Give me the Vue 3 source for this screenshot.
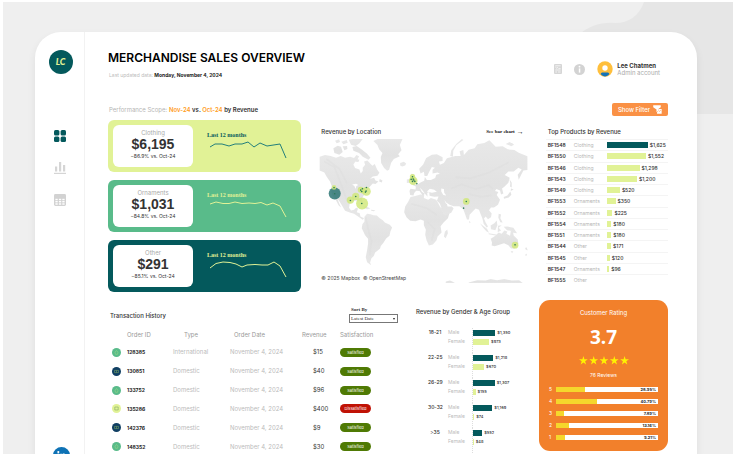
<script setup>
const cards = [
  { name: 'Clothing', value: '$6,195', change: '−86.9% vs. Oct-24', tone: 'lime', line: '3,16 8,13 15,13 22,15 28,13 35,13 41,11 47,16 53,12 60,15 73,13 79,27' },
  { name: 'Ornaments', value: '$1,031', change: '−84.8% vs. Oct-24', tone: 'green', line: '3,13 9,11 16,12.5 22,12.5 28,11 35,12.5 42,12 48,12.5 54,11.5 60,14 66,12 73,15 79,26' },
  { name: 'Other', value: '$291', change: '−85.1% vs. Oct-24', tone: 'teal', line: '3,17 9,12.5 16,11 23,11.5 29,13 35,16 40,14 48,13.5 55,14 61,14 67,11 73,15 79,26' }
]

const products = [
  ['BF1548', 'Clothing', 1625], ['BF1550', 'Clothing', 1552], ['BF1546', 'Clothing', 1298],
  ['BF1543', 'Clothing', 1200], ['BF1549', 'Clothing', 520], ['BF1553', 'Ornaments', 350],
  ['BF1552', 'Ornaments', 225], ['BF1554', 'Ornaments', 180], ['BF1551', 'Ornaments', 180],
  ['BF1544', 'Other', 171], ['BF1545', 'Other', 120], ['BF1547', 'Ornaments', 96],
  ['BF1555', 'Other', 0]
]

const orders = [
  { id: '128385', kind: 'green', type: 'International', amount: '$15', ok: true },
  { id: '130851', kind: 'navy', type: 'Domestic', amount: '$40', ok: true },
  { id: '133752', kind: 'green', type: 'Domestic', amount: '$96', ok: true },
  { id: '135286', kind: 'lime', type: 'Domestic', amount: '$400', ok: false },
  { id: '142376', kind: 'navy', type: 'Domestic', amount: '$9', ok: true },
  { id: '148352', kind: 'green', type: 'Domestic', amount: '$30', ok: true }
]

const ages = [
  { range: '18-21', male: 1350, female: 973 },
  { range: '22-25', male: 1218, female: 670 },
  { range: '26-29', male: 1307, female: 155 },
  { range: '30-32', male: 1169, female: 74 },
  { range: '>35', male: 552, female: 48 }
]

const ratings = [[5, '28.95'], [4, '40.79'], [3, '7.89'], [2, '13.16'], [1, '9.21']]

const spots = [
  [74, 220, 18, 'big'], [72, 202, 7], [121, 240, 11], [137, 229, 11], [156, 250, 18],
  [152, 209, 9], [158, 212, 8], [169, 214, 13], [307, 170, 8], [309, 182, 13],
  [468, 244, 10], [614, 375, 10]
]
const dots = [
  [74, 221], [72, 202], [121, 241], [137, 229], [155, 250], [152, 210], [157, 206], [155, 214],
  [166, 216], [168, 213], [169, 202], [307, 170], [303, 178], [309, 177], [307, 184], [314, 184],
  [311, 180], [320, 191], [468, 244], [460, 264], [614, 374]
]

const money = (n) => '$' + n.toLocaleString('en-US')
</script>

<template>
  <div class="frame">
    <svg class="wave" viewBox="0 0 152 112" aria-hidden="true">
      <path d="M63 0C58 14 48 21 34 21C18 20 8 25 0 31L40 60L100 112H152V0Z" fill="#e6e6e6" />
    </svg>
    <div class="panel">
      <nav class="side" aria-label="Main">
        <a class="logo" href="#">LC</a>
        <a href="#" aria-label="Overview" class="item">
          <svg viewBox="0 0 12 12" fill="#04595c"><rect width="5.4" height="5.6" rx="1.5" /><rect x="6.6" width="5.4" height="5.6" rx="1.5" /><rect y="6.5" width="5.4" height="5.5" rx="1.5" /><rect x="6.6" y="6.5" width="5.4" height="5.5" rx="1.5" /></svg>
        </a>
        <a href="#" aria-label="Charts" class="item">
          <svg viewBox="0 0 12 12" fill="#d5d5d5"><rect x="1" y="4.5" width="2.2" height="5" /><rect x="5" width="2.2" height="9.5" /><rect x="9" y="3" width="2.2" height="6.5" /><rect y="10.8" width="12" height="1.2" /></svg>
        </a>
        <a href="#" aria-label="Calendar" class="item">
          <svg viewBox="0 0 12 12"><rect width="12" height="12" rx="1.4" fill="#d2d2d2" /><g fill="#fff"><rect x="1.4" y="4.8" width="2.3" height="1.4" /><rect x="4.9" y="4.8" width="2.3" height="1.4" /><rect x="8.3" y="4.8" width="2.3" height="1.4" /><rect x="1.4" y="7" width="2.3" height="1.4" /><rect x="4.9" y="7" width="2.3" height="1.4" /><rect x="8.3" y="7" width="2.3" height="1.4" /><rect x="1.4" y="9.3" width="2.3" height="1.4" /><rect x="4.9" y="9.3" width="2.3" height="1.4" /><rect x="8.3" y="9.3" width="2.3" height="1.4" /></g></svg>
        </a>
        <a href="#" class="linkedin" aria-label="LinkedIn">
          <svg viewBox="0 0 16 16"><circle cx="8" cy="8" r="8" fill="#0e72b5" /><g fill="#fff"><circle cx="5" cy="4.8" r="1" /><rect x="4.1" y="6.3" width="1.7" height="5.2" /><path d="M6.8 6.3H8.4V7C9.6 5.6 12 6 12 8.5V11.5H10.3V8.8C10.3 7.2 8.5 7.2 8.5 8.8V11.5H6.8Z" /></g></svg>
        </a>
      </nav>

      <main class="main">
        <header class="head">
          <div>
            <h1>MERCHANDISE SALES OVERVIEW</h1>
            <p class="updated">Last updated data: <b>Monday, November 4, 2024</b></p>
          </div>
          <div class="user">
            <svg class="doc" viewBox="0 0 8 10"><rect width="8" height="10" rx="1" fill="#d6d6d6" /><path d="M1.3 1.8H6.6M1.3 3L2.8 4.3L4 3.2M4.4 4.4H6.6M1.3 6H6.6M1.3 8H3M4 8H6.6" stroke="#fff" stroke-width=".7" fill="none" /></svg>
            <svg class="info" viewBox="0 0 11 11"><circle cx="5.5" cy="5.5" r="5.5" fill="#d3d3d3" /><circle cx="5.5" cy="2.7" r=".9" fill="#fff" /><rect x="4.8" y="4.4" width="1.5" height="4.2" fill="#fff" /></svg>
            <svg class="avatar" viewBox="0 0 16 16"><circle cx="8" cy="8" r="7.7" fill="#ffbf3c" /><circle cx="8" cy="7" r="2.7" fill="#fff" /><path d="M3.6 13C4 11.8 5 11.4 6 11.4H10C11 11.4 12 11.8 12.4 13C10 16.2 6 16.2 3.6 13Z" fill="#1473b8" /></svg>
            <p><b>Lee Chatmen</b><br />Admin account</p>
          </div>
        </header>

        <div class="scope">
          <p>Performance Scope: <b><em>Nov-24</em> vs. <em>Oct-24</em> by Revenue</b></p>
          <button type="button">Show Filter
            <svg viewBox="0 0 8 8" fill="#fff"><path d="M.2 .2H6.9V2L5 3.4V4.8L3.1 6.5V4L.2 2Z" /><path d="M5 3.6H7.7V7.8H3.6V6.5L5 5.2Z" /><path d="M5.3 6L7 4.6" stroke="#fa9145" stroke-width=".5" /></svg>
          </button>
        </div>

        <div class="row top">
          <section class="cards">
            <article v-for="c in cards" :key="c.name" class="card" :class="c.tone">
              <div class="stat"><span>{{ c.name }}</span><strong>{{ c.value }}</strong><small>{{ c.change }}</small></div>
              <div class="trend">
                <p>Last 12 months</p>
                <svg viewBox="0 8 82 22" aria-hidden="true"><polyline :points="c.line" fill="none" stroke-width="1" stroke-linejoin="round" /></svg>
              </div>
            </article>
          </section>

          <section>
            <div class="title"><h2>Revenue by Location</h2><a href="#">See bar chart <span>→</span></a></div>
            <div class="map">
              <svg viewBox="27 57 624 432" role="img" aria-label="World map of revenue">
                <defs>
                  <linearGradient id="land" x1="0" y1="0" x2="0" y2="1"><stop offset="0" stop-color="#e8e8e8" /><stop offset=".5" stop-color="#e2e2e2" /><stop offset="1" stop-color="#e7e7e7" /></linearGradient>
                </defs>
                <g fill="url(#land)">
                  <path d="M29 110L45 105L62 108L78 113L92 108L105 113L120 110L132 114L139 105L147 109L143 117L136 124L130 133L135 144L148 148L152 160L158 153L158 143L165 134L162 124L172 121L181 131L187 137L194 132L201 148L208 158L202 167L188 169L180 176L192 173L196 181L205 184L196 192L188 190L181 198L175 206L170 216L162 225L155 235L159 248L157 254L150 243L139 241L128 244L119 251L117 263L123 271L132 269L138 263L144 265L140 276L149 279L151 289L162 294L158 299L145 290L132 281L119 277L105 272L98 260L89 245L81 234L88 251L93 262L86 256L77 239L68 228L64 216L65 198L60 184L50 170L43 157L29 151Z" />
                  <path d="M75 62L87 58L90 66L80 70ZM70 85L83 77L93 80L98 96L88 104L73 99ZM94 65L110 60L113 68L100 73ZM98 79L111 78L112 87L103 91ZM116 59L128 57H158L148 70L137 78L123 74ZM127 81L140 78L156 89L171 101L181 113L175 119L158 110L147 99L130 92ZM137 116L148 119L145 126L136 125Z" />
                  <path d="M190 63L202 57H277L269 75L274 91L264 103L269 109L251 117L243 128L237 149L231 152L222 144L213 129L212 111L217 99L207 88L202 75Z" />
                  <path d="M270 129L281 125L288 130L285 136L276 139L270 136ZM209 177L217 181L215 187L207 184ZM157 260L168 258L181 265L171 267ZM183 269L196 270L191 273L183 272Z" />
                  <path d="M163 290L171 281L181 282L190 285L200 286L209 294L218 300L224 307L239 314L246 322L241 333L238 347L228 355L220 368L212 377L210 385L201 392L195 397L191 407L184 414L180 427L183 435L171 426L167 411L171 390L174 370L174 356L165 345L155 324L157 312L163 304Z" />
                  <path d="M301 231L315 228L331 223L342 225L341 234L354 239L362 234L378 239L384 249L391 263L401 280L418 278L413 294L400 307L391 318L394 337L382 349L379 360L368 373L356 376L349 360L345 344L347 329L341 315L341 302L331 298L316 303L300 302L289 291L282 276L285 259L294 245Z" />
                  <path d="M411 328L413 339L406 354L401 349L404 335ZM303 161L312 162L312 170L319 181L322 191L309 195L302 188L307 178L301 172ZM290 178L299 176L300 188L290 189Z" />
                  <path d="M300 225L298 213L301 206L316 208L317 199L307 195L321 194L331 187L342 182L344 171L350 180L362 180L375 174L378 164L389 161L382 157L367 160L367 149L374 143L365 141L357 155L351 168L343 168L341 155L331 160L327 146L339 133L348 114L365 104L380 103L397 112L397 123L386 124L389 134L401 129L410 115L435 108L451 108L448 94L459 90L461 105L475 89L493 85L501 73L522 69L537 61L556 80L577 79L592 88L612 90L625 98L651 109V150L639 151L632 165L625 179L622 164L634 148L624 143L610 154L594 154L583 165L598 173L594 188L582 200L575 205L579 220L572 223L569 211L558 207L554 213L564 216L559 225L569 239L563 254L551 262L542 262L536 270L544 280L542 291L533 297L526 289L521 295L526 307L533 319L529 322L520 311L516 294L511 282L506 269L496 265L488 273L478 284L476 298L470 298L464 281L459 267L447 258L430 258L418 254L409 248L412 259L425 259L430 265L423 278L404 286L395 273L386 253L380 242L385 229L372 230L358 227L357 216L351 218L352 230L345 222L336 210L329 203L335 215L344 221L338 227L328 213L318 212L312 219L310 226Z" />
                  <path d="M420 108L423 91L438 72L455 57L459 60L438 76L429 92L428 110ZM586 72L598 66L607 72L600 77ZM590 71L605 69L611 74L602 79ZM597 177L604 188L604 202L599 199L600 190ZM602 205L610 208L601 213ZM600 214L603 224L595 232L581 236L580 231L591 226ZM476 302L481 306L478 309ZM509 309L517 316L530 326L536 338L528 333L518 322ZM535 339L558 343L555 346L535 342ZM541 316L552 309L559 301L561 315L555 330L542 327ZM563 317L574 315L565 323L572 331L562 336ZM565 281L572 283L570 294L577 307L570 306L564 293ZM580 320L591 319L609 323L620 339L608 338L601 332L590 330Z" />
                  <path d="M541 356L552 349L565 337L574 341L582 331L591 334L588 341L599 347L602 328L608 336L610 346L622 358L624 371L614 385L602 385L594 375L581 369L567 374L553 378L544 376L545 367ZM601 393L609 393L605 399ZM647 380L651 387V391L644 386ZM643 404L650 400L648 407Z" />
                  <path d="M407 484L419 481L429 485L435 489H406ZM475 487L501 480L526 481L541 476L560 480L582 476L604 481L626 480L638 489H476Z" />
                </g>
                <g fill="#fff">
                  <path d="M350 214L359 206L372 209L380 215L365 218ZM393 205L401 207L402 218L408 226L399 225L393 214ZM380 241L389 251L394 265L389 258ZM402 240L413 253L407 250ZM126 193L138 191L145 195L139 198L136 207L133 198Z" />
                </g>
                <path d="M42 124L74 142L97 204L111 243M49 117L88 146L111 190M422 205L454 193L496 207L535 195L548 206M474 221L510 230L544 226M436 171L481 175L535 158L595 127M167 292L174 326L184 361L179 405M303 251L349 264L380 285M352 306L373 326L364 362" fill="none" stroke="#dcdcdc" stroke-width="5" opacity=".4" />
                <circle v-for="(s, i) in spots" :key="'s' + i" :cx="s[0]" :cy="s[1]" :r="s[2]" :class="['spot', s[3]]" />
                <circle v-for="(d, i) in dots" :key="'d' + i" :cx="d[0]" :cy="d[1]" r="2.4" fill="#2d7a58" />
              </svg>
              <p class="credit">© 2025 Mapbox&nbsp; © OpenStreetMap</p>
            </div>
          </section>

          <section>
            <div class="title"><h2>Top Products by Revenue</h2></div>
            <table class="products">
              <tbody>
                <tr v-for="(p, i) in products" :key="p[0]">
                  <th scope="row">{{ p[0] }}</th>
                  <td class="type">{{ p[1] }}</td>
                  <td class="amount"><div v-if="p[2]"><i :class="{ best: i === 0 }" :style="{ width: p[2] / 1625 * 67 + '%' }"></i><b>{{ money(p[2]) }}</b></div></td>
                </tr>
              </tbody>
            </table>
          </section>
        </div>

        <div class="row bottom">
          <section class="history">
            <div class="history-head">
              <h2>Transaction History</h2>
              <div class="sort">
                <label for="sort">Sort By</label>
                <div class="pick"><select id="sort"><option>Latest Date</option><option>Oldest Date</option></select></div>
              </div>
            </div>
            <table class="orders">
              <thead><tr><th class="mark"></th><th class="order">Order ID</th><th class="kind">Type</th><th class="date">Order Date</th><th class="rev">Revenue</th><th>Satisfaction</th></tr></thead>
              <tbody>
                <tr v-for="o in orders" :key="o.id">
                  <td><svg class="badge" :class="o.kind" viewBox="0 0 8 8"><circle cx="4" cy="4" r="4" /><path v-if="o.kind === 'green'" d="M4 2.2L5.3 3.8L4.9 5.6H3.1L2.7 3.8Z" /><path v-else-if="o.kind === 'lime'" d="M2.5 2.7H5.5V5.3H2.5Z" /><path v-else d="M2.2 3H5.8V5H2.2ZM4 3V5" /></svg></td>
                  <td class="oid">{{ o.id }}</td>
                  <td>{{ o.type }}</td>
                  <td>November 4, 2024</td>
                  <td class="sum">{{ o.amount }}</td>
                  <td><span class="pill" :class="{ bad: !o.ok }">{{ o.ok ? 'Satisfied' : 'Dissatisfied' }}</span></td>
                </tr>
              </tbody>
            </table>
          </section>

          <section class="gender">
            <h2>Revenue by Gender &amp; Age Group</h2>
            <div class="groups">
              <div v-for="a in ages" :key="a.range" class="group">
                <b class="range">{{ a.range }}</b>
                <div class="names"><span>Male</span><span>Female</span></div>
                <div class="bars">
                  <div><i class="male" :style="{ width: a.male / 1350 * 43 + '%' }"></i><b>{{ money(a.male) }}</b></div>
                  <div><i :style="{ width: a.female / 1350 * 43 + '%' }"></i><b>{{ money(a.female) }}</b></div>
                </div>
              </div>
            </div>
          </section>

          <section class="rating">
            <h2>Customer Rating</h2>
            <strong>3.7</strong>
            <svg class="stars" viewBox="0 0 50 9" role="img" aria-label="Five stars"><path v-for="n in 5" :key="n" :transform="`translate(${(n - 1) * 10.3} 0)`" d="M4.4 0L5.4 3.3H8.8L6.1 5.3L7.1 8.5L4.4 6.5L1.7 8.5L2.7 5.3L0 3.3H3.4Z" fill="#fff200" /></svg>
            <p>76 Reviews</p>
            <ul>
              <li v-for="r in ratings" :key="r[0]"><span>{{ r[0] }}</span><div class="track"><i :style="{ width: r[1] + '%' }"></i><b>{{ r[1] }}%</b></div></li>
            </ul>
          </section>
        </div>
      </main>
    </div>
  </div>
</template>

<style>
body { background: #fff; }
</style>

<style scoped>
* { box-sizing: border-box; margin: 0; padding: 0; }
svg { display: block; }
a { color: inherit; text-decoration: none; }
.frame {
  position: relative;
  height: calc(100vh - 2px);
  margin: 2px 3px 0;
  padding: 30px 36px 0 32px;
  overflow: hidden;
  background: #efefef;
  color: #333;
  font: 6px/8px Inter, "Open Sans", sans-serif;
}
.wave { position: absolute; top: 0; right: 0; width: 152px; }
.panel {
  position: relative;
  display: flex;
  height: 100%;
  background: #fff;
  border-radius: 26px 26px 0 0;
  box-shadow: 0 4px 8px rgb(0 0 0 / 7%);
}
.side {
  flex: none;
  display: flex;
  flex-direction: column;
  align-items: center;
  gap: 20px;
  width: 50px;
  padding-top: 18px;
  border-right: 1px solid #f2f2f2;
}
.logo {
  display: grid;
  place-items: center;
  width: 24px;
  height: 24px;
  margin: 0 0 36px 2px;
  border-radius: 50%;
  background: #04595c;
  color: #e1f296;
  font: italic 900 9px/12px Lato, sans-serif;
}
.item svg { width: 12px; height: 12px; }
.linkedin { margin-top: auto; margin-bottom: -10px; padding-left: 3px; }
.linkedin svg { width: 17px; height: 17px; }
.main { flex: 1; min-width: 0; padding: 18px 29px 0 23px; }
.head { display: flex; justify-content: space-between; height: 53px; }
h1 { font: 600 12px/16px Inter, sans-serif; color: #000; white-space: nowrap; }
h2 { font: 500 6px/8px Inter, sans-serif; white-space: nowrap; }
.updated { margin-top: 5px; padding-left: 1px; font-size: 5px; color: #bcbcbc; }
.updated b { color: #222; }
.user { display: flex; align-items: center; align-self: flex-start; gap: 12px; padding: 11px 8px 0 0; line-height: 7px; color: #aaa; }
.user b { color: #333; }
.user p { margin-left: -8px; }
.doc { width: 8px; height: 10px; }
.info { width: 11px; height: 11px; }
.avatar { width: 16px; height: 16px; }
.scope { display: flex; align-items: center; justify-content: space-between; height: 13px; margin-bottom: 4px; padding-left: 1px; font-size: 6px; color: #b5b5b5; }
.scope b { font-weight: 600; color: #333; }
.scope em { font-style: normal; color: #ff9d1e; }
.scope button {
  display: flex;
  align-items: center;
  gap: 3px;
  height: 13px;
  padding: 0 6px;
  border: 0;
  border-radius: 2px;
  background: #fa9145;
  color: #fff;
  font: 500 6px/8px Inter, sans-serif;
}
.scope button svg { width: 9px; height: 9px; }
.row { display: grid; }
.top { grid-template-columns: 193fr 208fr 122fr; gap: 18px; }
.top > section, .bottom > section { min-width: 0; }
.cards { display: grid; gap: 8px; align-content: start; }
.card { display: flex; align-items: center; gap: 14px; height: 52px; padding: 5px; border-radius: 6px; }
.lime { background: #e1f296; color: #04595c; stroke: #237f7b; }
.green { background: #59bb8a; color: #e1f296; stroke: #e1f296; }
.teal { background: #04595c; color: #e1f296; stroke: #e1f296; }
.stat { display: flex; flex-direction: column; align-items: center; width: 80px; height: 42px; padding-top: 4px; border-radius: 6px; background: #fff; color: #333; }
.stat span { color: #aaa; }
.stat strong { font: 700 14px/15px "Liberation Sans", sans-serif; }
.stat small { font-size: 5px; line-height: 8px; }
.trend { flex: 1; }
.trend p { font: 700 6px/8px "Liberation Serif", serif; }
.trend svg { width: 82px; height: 22px; }
.title { display: flex; align-items: center; justify-content: space-between; height: 12px; margin: 6px 0 1px; padding: 0 4px 0 2px; }
.title a { display: flex; gap: 2px; color: #111; font: 700 5px/8px "Liberation Serif", serif; }
.title span { font-size: 7px; }
.map { position: relative; }
.map svg { width: 100%; }
.spot { fill: #d0e877; opacity: .82; }
.big { fill: #24706f; }
.credit { position: absolute; left: 2px; bottom: 1px; color: #444; font-size: 5px; }
.products { width: 100%; height: 146px; border-collapse: collapse; table-layout: fixed; font-size: 5px; line-height: 6px; text-align: left; }
.products tr { border-top: 1px solid #f4f4f4; }
.products th { width: 28px; padding-left: 2px; font-weight: 600; }
.products .type { width: 33px; color: #b5b5b5; }
.amount div { display: flex; align-items: center; gap: 2px; }
.amount i { flex: none; height: 6px; background: #e1f296; }
.amount .best { background: #04595c; }
.amount b { font-weight: 500; }
.bottom { grid-template-columns: 294fr 109fr 129fr; gap: 14px; padding-top: 8px; align-items: start; }
.history-head { display: flex; justify-content: space-between; padding: 6px 4px 0 2px; }
.history-head h2 { padding-top: 6px; }
.sort { width: 49px; font: 700 5px/8px "Liberation Serif", serif; }
.sort label { display: block; padding-left: 2px; }
.pick { position: relative; }
.pick::after { content: ""; position: absolute; top: 4px; right: 3px; border: 1px solid transparent; border-top: 2px solid #222; pointer-events: none; }
.pick select { display: block; width: 100%; height: 9px; padding-left: 1px; appearance: none; border: 1px solid #777; border-radius: 0; background: #fff; color: #333; font: 5px/7px "Liberation Serif", serif; }
.orders { width: 100%; height: 129px; margin-top: 4px; border-collapse: collapse; table-layout: fixed; color: #bbb; text-align: left; }
.orders th { height: 16px; color: #999; font-weight: 400; }
.orders .mark { width: 19px; }
.orders .order { width: 46px; }
.orders .kind { width: 57px; padding-left: 11px; }
.orders .date { width: 72px; padding-left: 4px; }
.orders .rev { width: 38px; }
.badge { width: 9px; height: 9px; margin-left: 4px; fill: #59bb8a; stroke: none; background: none; }
.badge path { fill: none; stroke: #9bdc86; stroke-width: .5; }
.badge.navy { fill: #103f63; }
.badge.lime { fill: #e1f296; }
.badge.navy path, .badge.lime path { stroke: #79a663; }
.orders .oid { color: #222; font-size: 5px; font-weight: 700; }
.orders .sum { padding-left: 11px; color: #333; }
.pill { display: block; width: 31px; border-radius: 5px; background: #4f7a04; color: #fff; font-size: 4px; line-height: 9px; text-align: center; }
.pill.bad { background: #c01205; }
.gender h2 { padding-top: 8px; line-height: 8px; }
.groups { padding-top: 12px; }
.group { display: grid; grid-template-columns: 26px 18px 1fr; column-gap: 6px; height: 25px; line-height: 9px; color: #bbb; }
.group .range { padding-left: 12px; text-align: center; font-size: 5px; font-weight: 500; color: #333; white-space: nowrap; }
.names { display: grid; align-content: start; font-size: 5px; }
.bars { border-left: 1px dotted #ddd; font-size: 4px; }
.bars div { display: flex; align-items: center; gap: 2px; height: 9px; }
.bars i { flex: none; height: 6px; background: #e1f296; }
.bars .male { background: #04595c; }
.bars b { font-weight: 500; color: #333; }
.rating { display: flex; flex-direction: column; align-items: center; height: 151px; padding: 9px 10px 0; border-radius: 11px; background: #f2802b; color: #fff; }
.rating h2 { font-weight: 400; }
.rating strong { margin-top: 8px; font: 700 19px/24px "Open Sans", sans-serif; }
.stars { width: 50px; height: 9px; margin-top: 7px; overflow: visible; }
.rating p { margin-top: 6px; font-size: 5px; }
.rating ul { display: grid; gap: 4px; width: 100%; margin-top: 6px; list-style: none; }
.rating li { display: flex; align-items: center; gap: 4px; font-size: 5px; }
.rating li span { width: 3px; }
.track { display: flex; flex: 1; justify-content: space-between; align-items: center; height: 5px; padding-right: 2px; background: #fff; }
.track i { height: 5px; background: #f5d72c; }
.track b { color: #222; font-size: 4px; line-height: 5px; }
</style>
